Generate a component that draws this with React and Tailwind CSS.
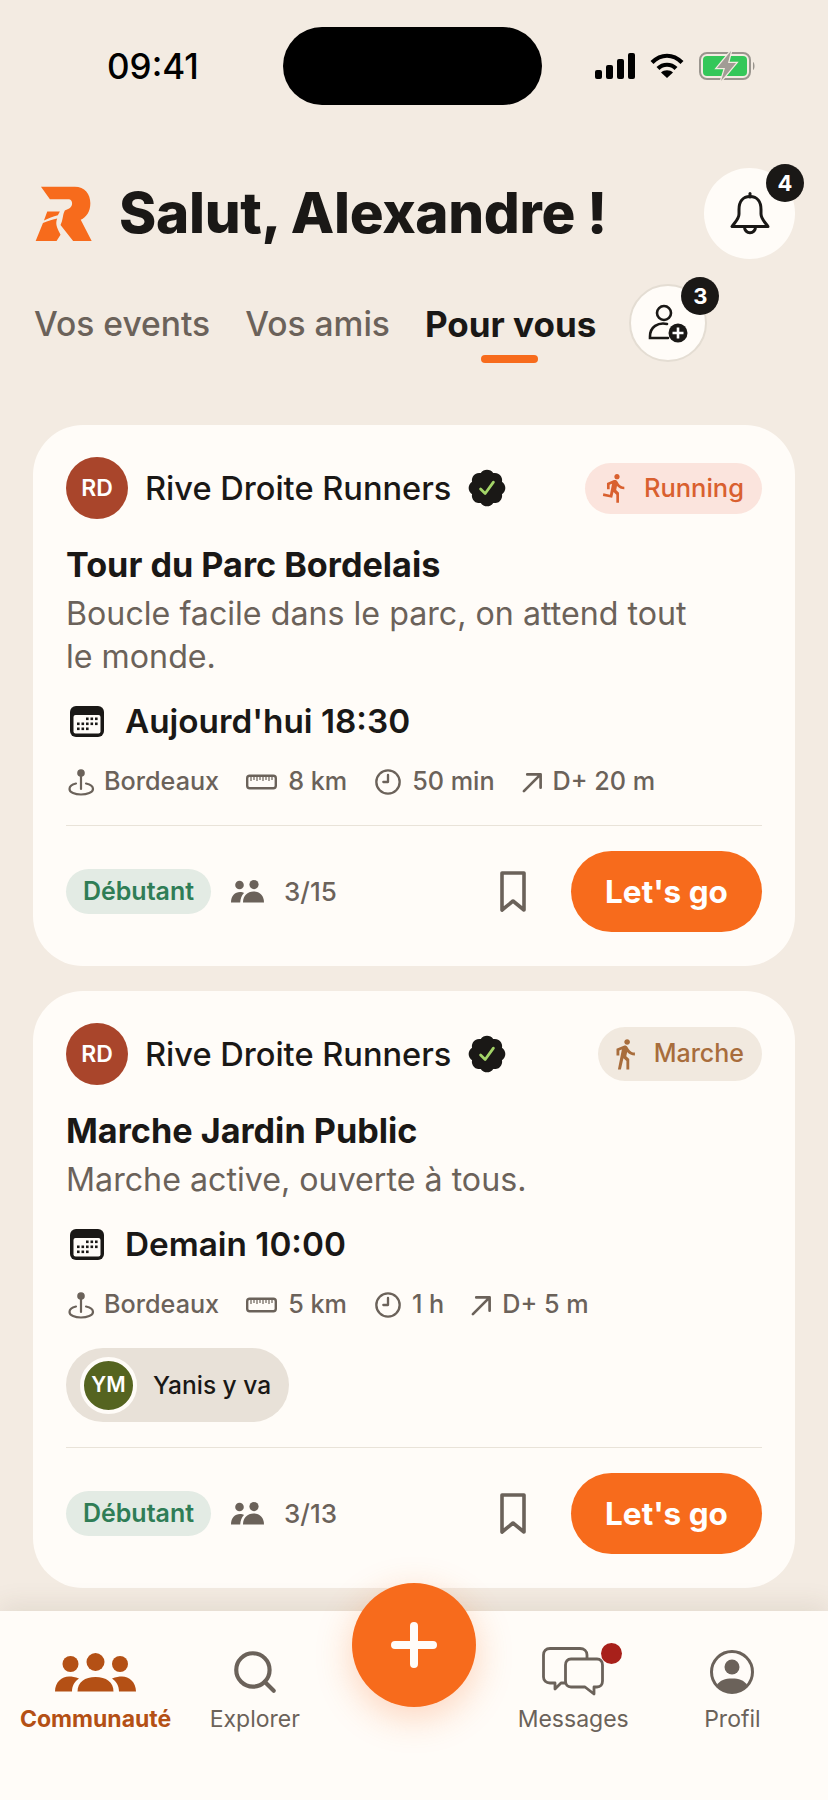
import { Search, Clock9 } from 'lucide-react';
import { MdDirectionsRun, MdDirectionsWalk } from 'react-icons/md';

const Logo = () => (
  <svg width="58" height="58" viewBox="45 45 175 175" className="shrink-0">
    <path fill="#f76b1c" d="M63 50H165C195 50 212 72 212 100C212 125 200 142 183 150L216 214H160L122 166C130 150 128 135 135 122L148 116C160 110 160 90 148 88H90Z" />
    <path fill="#f76b1c" d="M82 125H120L114 136C100 140 85 145 72 152Z" />
    <path fill="#f76b1c" d="M69 160C85 153 100 148 112 146C104 165 115 180 122 195L110 214H47Z" />
  </svg>
);

const Signal = () => (
  <svg width="40" height="26" viewBox="0 0 40 26" fill="#000">
    <rect x="0" y="17" width="7" height="9" rx="2" />
    <rect x="11" y="12" width="7" height="14" rx="2" />
    <rect x="22" y="6" width="7" height="20" rx="2" />
    <rect x="33" y="0" width="7" height="26" rx="2" />
  </svg>
);

const Wifi = () => (
  <svg width="34" height="26" viewBox="0 0 34 26" fill="none" stroke="#000" strokeWidth="4.2">
    <path d="M2 9.5C11 0.5 23 0.5 32 9.5" />
    <path d="M8 15.5C13 10.5 21 10.5 26 15.5" />
    <path d="M17 25L11 19.5C14 16.5 20 16.5 23 19.5Z" fill="#000" stroke="none" />
  </svg>
);

const Battery = () => (
  <svg width="57" height="30" viewBox="0 0 57 30" className="overflow-visible">
    <rect x="1" y="2" width="50" height="26" rx="7" fill="none" stroke="#9a958e" strokeWidth="2" />
    <rect x="4" y="5" width="44" height="20" rx="4" fill="#34c759" />
    <path d="M54 11C56 12 56 18 54 19Z" fill="#9a958e" />
    <path d="M32 0L18 17H26L22 30L37 12H29Z" fill="#a19c95" stroke="#f3ebe2" strokeWidth="2.5" paintOrder="stroke" />
  </svg>
);

const BellIcon = () => (
  <svg width="40" height="43" viewBox="0 0 40 43" fill="none" stroke="#1a1816" strokeWidth="3" strokeLinejoin="round">
    <path d="M20 1.5V5" strokeLinecap="round" />
    <path d="M20 4.5C12.5 4.5 9 10 9 17.5V22C9 27 5 30 2 34.5H38C35 30 31 27 31 22V17.5C31 10 27.5 4.5 20 4.5Z" />
    <path d="M14.5 35A5.5 5.8 0 0 0 25.5 35" />
  </svg>
);

const AddFriend = () => (
  <svg width="40" height="40" viewBox="0 0 40 40" fill="none" stroke="#1a1816" strokeWidth="2.6">
    <circle cx="16" cy="10" r="7" />
    <path d="M19 21C10 19 2 24 2 33.5V35H20" strokeLinecap="round" />
    <circle cx="30" cy="30" r="9.5" fill="#1a1816" stroke="none" />
    <path d="M30 24.5V35.5M24.5 30H35.5" stroke="#fff" strokeWidth="2.6" />
  </svg>
);

const Verified = () => (
  <svg width="44" height="44" viewBox="0 0 24 24">
    <path fill="#1a1816" d="M3.85 8.62a4 4 0 0 1 4.78-4.77 4 4 0 0 1 6.74 0 4 4 0 0 1 4.78 4.78 4 4 0 0 1 0 6.74 4 4 0 0 1-4.77 4.78 4 4 0 0 1-6.75 0 4 4 0 0 1-4.78-4.77 4 4 0 0 1 0-6.76Z" />
    <path d="M8.5 12.5L11 15L15.5 8.8" fill="none" stroke="#a3d468" strokeWidth="1.5" strokeLinecap="round" strokeLinejoin="round" />
  </svg>
);

const CalendarIcon = () => (
  <svg width="34" height="32" viewBox="0 0 34 32" className="shrink-0">
    <rect width="34" height="31" rx="6" fill="#1a1816" />
    <rect x="3.5" y="9" width="27" height="18.5" rx="2" fill="#fffcf8" />
    <g fill="#1a1816">
      <rect x="16" y="11.5" width="2.6" height="2.6" />
      <rect x="20.5" y="11.5" width="2.6" height="2.6" />
      <rect x="25" y="11.5" width="2.6" height="2.6" />
      <rect x="7" y="16.5" width="2.6" height="2.6" />
      <rect x="11.5" y="16.5" width="2.6" height="2.6" />
      <rect x="16" y="16.5" width="2.6" height="2.6" />
      <rect x="20.5" y="16.5" width="2.6" height="2.6" />
      <rect x="25" y="16.5" width="2.6" height="2.6" />
      <rect x="7" y="21.5" width="2.6" height="2.6" />
      <rect x="11.5" y="21.5" width="2.6" height="2.6" />
      <rect x="16" y="21.5" width="2.6" height="2.6" />
    </g>
  </svg>
);

const PinIcon = () => (
  <svg width="27" height="28" viewBox="0 0 27 28" fill="none" stroke="#6b625a" strokeWidth="2.2" className="shrink-0">
    <circle cx="13" cy="5" r="3.8" fill="#6b625a" stroke="none" />
    <path d="M13 8V21" strokeLinecap="round" />
    <path d="M8 15.5C3.5 16.5 1.5 18.5 1.5 21C1.5 24.5 7 26.5 13 26.5C19 26.5 25 24.5 25 21C25 18.5 22.5 16.5 18 15.5" strokeLinecap="round" />
  </svg>
);

const RulerIcon = () => (
  <svg width="31" height="16" viewBox="0 0 31 16" fill="none" stroke="#6b625a" className="shrink-0">
    <rect x="1.2" y="1.8" width="28.6" height="12.4" rx="2.5" strokeWidth="2.4" />
    <path d="M5 3V7M8 3V6M11 3V7M14 3V6M17 3V7M20 3V6M23 3V7M26 3V6" strokeWidth="1.2" />
  </svg>
);

const ArrowIcon = () => (
  <svg width="21" height="21" viewBox="0 0 22 22" fill="none" stroke="#6b625a" strokeWidth="2.8" strokeLinecap="round" strokeLinejoin="round" className="shrink-0">
    <path d="M2 20L19.5 2.5M5.5 2.5H19.5V16.5" />
  </svg>
);

const PeopleIcon = () => (
  <svg width="33" height="23" viewBox="0 0 33 23" fill="#6b625a" className="shrink-0">
    <circle cx="8.5" cy="5" r="4.3" />
    <circle cx="23" cy="4.6" r="4.6" />
    <path d="M0 22.5C0 16 4 12 9 12C10.5 12 12 12.4 13 13C10.5 15.5 9.5 18.5 9.2 22.5Z" />
    <path d="M12 22.5C12 15.5 16.5 11.5 22.5 11.5C28.5 11.5 33 15.5 33 22.5Z" />
  </svg>
);

const BookmarkIcon = () => (
  <svg width="26" height="41" viewBox="0 0 26 41" fill="none" stroke="#6b625a" strokeWidth="3.6" strokeLinejoin="round" className="shrink-0">
    <path d="M2 2H24V39L13 30L2 39Z" />
  </svg>
);

const CommunityIcon = () => (
  <svg width="81" height="39" viewBox="0 0 81 39" fill="#b45015">
    <circle cx="15.5" cy="11" r="8" />
    <circle cx="40.5" cy="9" r="9" />
    <circle cx="65" cy="11" r="8" />
    <path d="M0 38.5C0 29 7 23.5 14 23.5C17 23.5 20 24 24 25.5C19.5 28.5 17 33 17 38.5Z" />
    <path d="M22.5 38.5C22.5 29 30 24 40.5 24C51 24 58.5 29 58.5 38.5Z" />
    <path d="M81 38.5C81 29 74 23.5 67 23.5C64 23.5 61 24 57 25.5C61.5 28.5 64 33 64 38.5Z" />
  </svg>
);

const MessagesIcon = () => (
  <svg width="62" height="50" viewBox="0 0 62 50" fill="none" stroke="#6b625a" strokeWidth="2.8" strokeLinejoin="round">
    <path d="M23 36H19L13 42V36H8C4 36 1.5 33.5 1.5 30V8C1.5 4 4 1.5 8 1.5H38C42 1.5 45 4 45 8V12" />
    <path d="M29 12H55C58.5 12 60.5 14.5 60.5 18V34C60.5 37.5 58.5 40 55 40H52V47L43 40H29C25.5 40 23.5 37.5 23.5 34V18C23.5 14.5 25.5 12 29 12Z" />
  </svg>
);

const ProfileIcon = () => (
  <svg width="44" height="44" viewBox="0 0 44 44">
    <circle cx="22" cy="22" r="20.5" fill="none" stroke="#6b625a" strokeWidth="3" />
    <circle cx="22" cy="17" r="7.5" fill="#6b625a" />
    <path d="M7 35C10 30 15 28.5 22 28.5C29 28.5 34 30 37 35C33 40 28 42.5 22 42.5C16 42.5 11 40 7 35Z" fill="#6b625a" />
  </svg>
);

const Badge = ({ value, className }) => (
  <span className={`absolute flex h-[38px] w-[38px] items-center justify-center rounded-full bg-[#1a1816] text-[22px] font-bold text-white ${className}`}>
    {value}
  </span>
);

const Meta = ({ icon, children, gap = 'gap-[11px]' }) => (
  <div className={`flex items-center ${gap}`}>
    {icon}
    <span>{children}</span>
  </div>
);

const EventCard = ({ sport, title, desc, date, km, time, dplus, count, friend }) => (
  <div className="rounded-[50px] bg-[#fffcf8] px-[33px] pt-[32px] pb-[34px]">
    <div className="flex h-[62px] items-center">
      <div className="flex h-[62px] w-[62px] items-center justify-center rounded-full bg-[#a9452b] text-[23px] font-semibold text-white">RD</div>
      <span className="ml-[17px] text-[32.6px] font-medium text-[#1a1816]">Rive Droite Runners</span>
      <span className="ml-[14px]"><Verified /></span>
      {sport === 'Running' ? (
        <div className="ml-auto flex h-[51px] items-center gap-[13px] rounded-full bg-[#fbe4dd] pr-[18px] pl-[14px] text-[25.5px] font-medium text-[#d9602f]">
          <MdDirectionsRun size={32} />
          <span>Running</span>
        </div>
      ) : (
        <div className="ml-auto flex h-[54px] items-center gap-[12px] rounded-full bg-[#f1e9df] pr-[18px] pl-[10px] text-[25px] font-medium text-[#a86d3c]">
          <MdDirectionsWalk size={34} />
          <span>Marche</span>
        </div>
      )}
    </div>
    <h2 className="mt-[24px] text-[34.2px] leading-[44px] font-bold text-[#1a1816]">{title}</h2>
    <p className="mt-[5px] max-w-[640px] text-[32.2px] leading-[43px] text-[#6b625a]">{desc}</p>
    <div className="mt-[24px] flex h-[40px] items-center gap-[21px] pl-[4px] text-[33.3px] font-semibold text-[#1a1816]">
      <CalendarIcon />
      <span>{date}</span>
    </div>
    <div className="mt-[24px] flex h-[32px] items-center gap-[27px] pl-[2px] text-[25.2px] font-medium text-[#6b625a]">
      <Meta icon={<PinIcon />} gap="gap-[9px]">Bordeaux</Meta>
      <Meta icon={<RulerIcon />}>{km}</Meta>
      <Meta icon={<Clock9 size={28} strokeWidth={2} />} gap="gap-[10px]">{time}</Meta>
      <Meta icon={<ArrowIcon />} gap="gap-[10px]">{dplus}</Meta>
    </div>
    {friend && (
      <div className="mt-[27px] flex h-[74px] w-[223px] items-center gap-[16px] rounded-full bg-[#e8e1d8] pl-[14px]">
        <div className="flex h-[57px] w-[57px] items-center justify-center rounded-full border-[4px] border-[#fffcf8] bg-[#556420] text-[21px] font-semibold text-white">YM</div>
        <span className="text-[24.5px] font-medium text-[#1a1816]">{friend}</span>
      </div>
    )}
    <div className={`h-px bg-[#e9e3d9] ${friend ? 'mt-[25px]' : 'mt-[27px]'}`} />
    <div className="mt-[25px] flex h-[81px] items-center">
      <span className="flex h-[45px] w-[145px] items-center justify-center rounded-full bg-[#e3ebe4] text-[25px] font-semibold text-[#2f7d56]">Débutant</span>
      <span className="ml-[20px]"><PeopleIcon /></span>
      <span className="ml-[20px] text-[26px] font-medium text-[#6b625a]">{count}</span>
      <span className="mr-[45px] ml-auto"><BookmarkIcon /></span>
      <button className="h-[81px] w-[191px] rounded-full bg-[#f76b1c] text-[31.5px] font-bold text-white">Let's go</button>
    </div>
  </div>
);

const NavItem = ({ icon, label, active }) => (
  <div className="flex flex-col items-center">
    <div className="flex h-[48px] items-center">{icon}</div>
    <span className={`mt-[8px] text-[23px] leading-[30px] whitespace-nowrap ${active ? 'font-bold text-[#b45015]' : 'font-normal text-[#6b625a]'}`}>{label}</span>
  </div>
);

export default function App() {
  return (
    <div className="flex h-[1800px] w-[828px] flex-col overflow-hidden bg-[#f3ebe2] font-['Inter',sans-serif]">
      <div className="flex-1 overflow-hidden">
        {/* Status bar */}
        <div className="flex items-center pt-[27px] pr-[72px] pl-[107px]">
          <span className="w-[176px] text-[35px] font-medium text-black">09:41</span>
          <div className="h-[78px] w-[259px] rounded-[39px] bg-black" />
          <div className="ml-auto flex items-center gap-[15px]">
            <Signal />
            <Wifi />
            <Battery />
          </div>
        </div>

        {/* Header */}
        <div className="mt-[63px] flex h-[91px] items-center pr-[33px] pl-[35px]">
          <Logo />
          <h1 className="ml-[26px] text-[56.5px] font-extrabold tracking-[-0.3px] text-[#1a1816]">Salut, Alexandre !</h1>
          <div className="relative ml-auto flex h-[91px] w-[91px] items-center justify-center rounded-full bg-[#fffcf8]">
            <BellIcon />
            <Badge value="4" className="-top-[4px] -right-[9px]" />
          </div>
        </div>

        {/* Tabs */}
        <div className="mt-[25px] flex h-[78px] items-center pl-[34px] text-[33.6px] text-[#6b625a]">
          <span className="pt-[2px] font-medium">Vos events</span>
          <span className="ml-[35px] pt-[2px] font-medium">Vos amis</span>
          <span className="relative ml-[35px] pt-[2px] text-[35px] font-bold text-[#1a1816]">
            Pour vous
            <span className="absolute -bottom-[13px] left-[56px] h-[8px] w-[57px] rounded-full bg-[#f76b1c]" />
          </span>
          <div className="relative ml-[33px] flex h-[78px] w-[78px] items-center justify-center rounded-full border-2 border-[#e4ddd3] bg-[#fffcf8]">
            <AddFriend />
            <Badge value="3" className="-top-[9px] -right-[14px]" />
          </div>
        </div>

        {/* Feed */}
        <div className="mt-[63px] flex flex-col gap-[25px] px-[33px]">
          <EventCard
            sport="Running"
            title="Tour du Parc Bordelais"
            desc="Boucle facile dans le parc, on attend tout le monde."
            date="Aujourd'hui 18:30"
            km="8 km"
            time="50 min"
            dplus="D+ 20 m"
            count="3/15"
          />
          <EventCard
            sport="Marche"
            title="Marche Jardin Public"
            desc="Marche active, ouverte à tous."
            date="Demain 10:00"
            km="5 km"
            time="1 h"
            dplus="D+ 5 m"
            count="3/13"
            friend="Yanis y va"
          />
        </div>
      </div>

      {/* Bottom nav */}
      <div className="relative h-[189px] shrink-0 bg-[#fffcf8] shadow-[0_-6px_24px_rgba(90,70,40,0.10)]">
        <div className="grid grid-cols-5 px-[16px] pt-[37px]">
          <NavItem active icon={<CommunityIcon />} label="Communauté" />
          <NavItem icon={<Search size={50} strokeWidth={2} color="#6b625a" />} label="Explorer" />
          <div />
          <div className="relative">
            <NavItem icon={<MessagesIcon />} label="Messages" />
            <span className="absolute top-[-5px] left-[107px] h-[21px] w-[21px] rounded-full bg-[#a8201a]" />
          </div>
          <NavItem icon={<ProfileIcon />} label="Profil" />
        </div>
        <button className="absolute -top-[28px] left-[352px] flex h-[124px] w-[124px] items-center justify-center rounded-full bg-[#f76b1c] shadow-[0_10px_36px_rgba(247,107,28,0.28)]">
          <svg width="46" height="46" viewBox="0 0 46 46" stroke="#fffcf8" strokeWidth="8" strokeLinecap="round">
            <path d="M23 4V42M4 23H42" />
          </svg>
        </button>
      </div>
    </div>
  );
}
